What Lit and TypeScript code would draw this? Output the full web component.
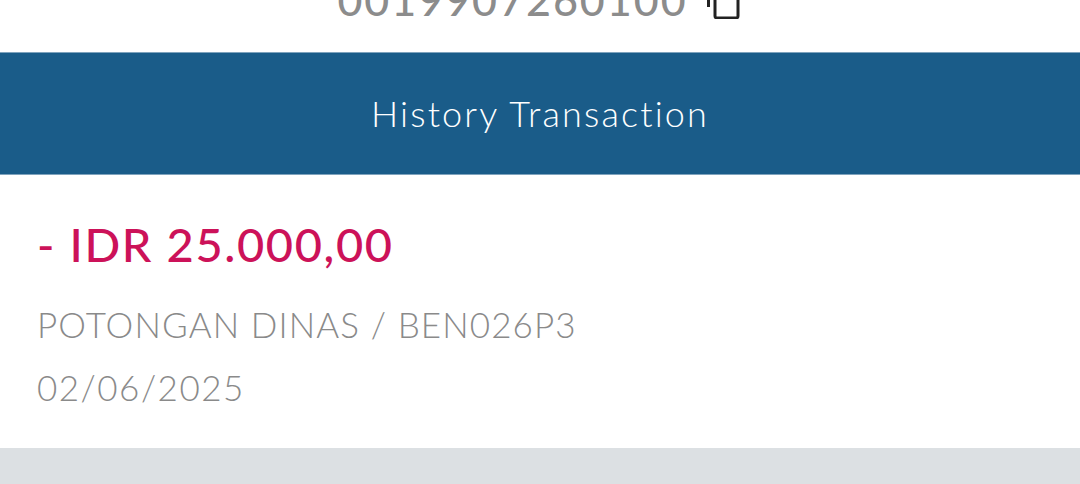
import { LitElement, css, html } from "lit";
import { customElement } from "lit/decorators.js";

@customElement("app-root")
export class AppRoot extends LitElement {
  static styles = css`
    :host {
      display: block;
      width: 1080px;
      height: 484px;
      overflow: hidden;
      background: #dce0e3;
      font-family: Lato, "Open Sans", sans-serif;
    }

    .account {
      height: 52px;
      background: #fff;
      overflow: hidden;
      display: flex;
      justify-content: center;
      align-items: flex-end;
      gap: 19px;
      padding-right: 3px;
      box-sizing: border-box;
    }

    .number {
      font-size: 43px;
      line-height: 46px;
      margin-bottom: 29px;
      color: #8c8c8c;
      letter-spacing: 2px;
      font-weight: 500;
    }

    .copy {
      flex: none;
      width: 33px;
      height: 36px;
      margin-bottom: 33px;
    }

    .title {
      height: 123px;
      background: #1a5c89;
      border-top: 1px solid #7fa3bd;
      border-bottom: 1px solid #7fa3bd;
      box-sizing: border-box;
      display: flex;
      justify-content: center;
      align-items: center;
      color: #fff;
      font-size: 36px;
      font-weight: 300;
      letter-spacing: 2.15px;
      padding-bottom: 2px;
    }

    .item {
      height: 273px;
      background: #fff;
      box-sizing: border-box;
      padding: 39px 37px 0;
      display: flex;
      flex-direction: column;
    }

    .amount {
      font-size: 47px;
      line-height: 60px;
      font-weight: 500;
      color: #cc1259;
      letter-spacing: 1.6px;
    }

    .desc,
    .date {
      font-size: 35px;
      line-height: 44px;
      font-weight: 300;
      color: #8a8a8a;
      letter-spacing: 1.1px;
    }

    .desc {
      margin-top: 28px;
    }

    .date {
      margin-top: 19px;
      letter-spacing: 1.5px;
    }
  `;

  render() {
    return html`
      <div class="account">
        <span class="number">0019907260100</span>
        <svg class="copy" viewBox="0 0 33 36" fill="none" stroke="#222" stroke-width="3">
          <path d="M1.5 0v24" />
          <rect x="8" y="3" width="23" height="32" rx="2" />
        </svg>
      </div>
      <div class="title">History Transaction</div>
      <div class="item">
        <div class="amount">- IDR 25.000,00</div>
        <div class="desc">POTONGAN DINAS / BEN026P3</div>
        <div class="date">02/06/2025</div>
      </div>
    `;
  }
}
